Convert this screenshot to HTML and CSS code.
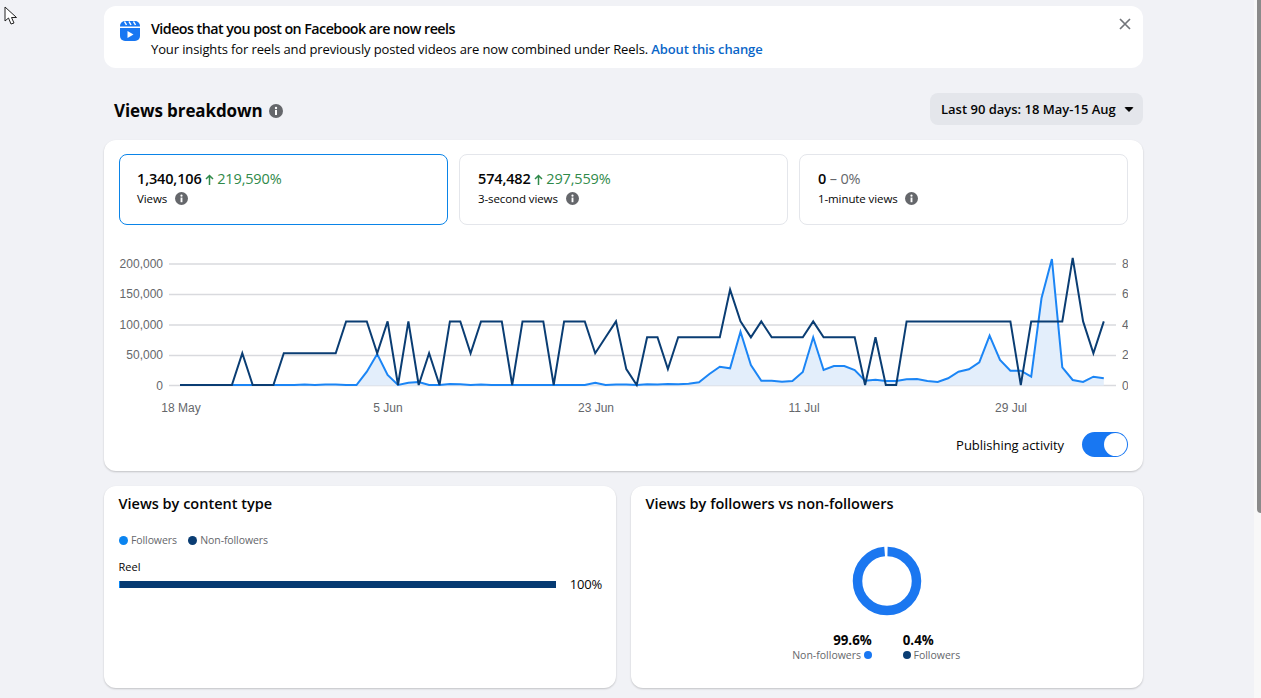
FILE: index.html
```html
<!DOCTYPE html>
<html lang="en">
<head>
    <meta charset="UTF-8">
    <meta name="viewport" content="width=device-width, initial-scale=1.0">
    <title>Views breakdown</title>
    <link rel="stylesheet" href="styles.css">
</head>
<body>

    <!-- Mouse pointer and scrollbar, both sit over the page -->
    <svg class="pointer" width="14" height="20" viewBox="0 0 14 20">
        <path d="M1 1 L1 15 L4.5 12 L7 18 L10 17 L7.5 11.5 L12.5 11.5 Z" fill="#fff" stroke="#222" stroke-width="1"/>
    </svg>
    <div class="scrollbar"><div class="scrollbar-thumb"></div></div>

    <div class="page">

        <!-- Notice -->
        <div class="notice">
            <svg class="notice-icon" width="20" height="20" viewBox="0 0 20 20">
                <path d="M0 5.5 V5 A5 5 0 0 1 5 0 H15 A5 5 0 0 1 20 5 V5.5 Z" fill="#1877f2"/>
                <path d="M0 7 H20 V15 A5 5 0 0 1 15 20 H5 A5 5 0 0 1 0 15 Z" fill="#1877f2"/>
                <path d="M4.5 0.5 L6.5 4 M9 0.5 L11 4 M13.5 0.5 L15.5 4" stroke="#fff" stroke-width="1.5"/>
                <path d="M7.5 10 L13.5 13.5 L7.5 17 Z" fill="#fff"/>
            </svg>
            <div class="notice-text">
                <div class="notice-title">Videos that you post on Facebook are now reels</div>
                <div class="notice-body">Your insights for reels and previously posted videos are now combined under Reels. <a class="notice-link" href="#">About this change</a></div>
            </div>
            <svg class="notice-close" width="12" height="12" viewBox="0 0 12 12">
                <path d="M1 1 L11 11 M11 1 L1 11" stroke="#72757a" stroke-width="1.7"/>
            </svg>
        </div>

        <!-- Heading -->
        <div class="section-head">
            <div class="section-title">
                <h1>Views breakdown</h1>
                <svg class="info info-big" viewBox="0 0 14 14"><circle cx="7" cy="7" r="7" fill="#65676b"/><rect x="6" y="6" width="2" height="5" fill="#fff"/><circle cx="7" cy="4" r="1.2" fill="#fff"/></svg>
            </div>
            <button class="range-button">Last 90 days: 18 May-15 Aug <span class="caret"></span></button>
        </div>

        <!-- Main chart card -->
        <div class="card main-card">
            <div class="tiles">
                <div class="tile active">
                    <div class="tile-value">1,340,106 <span class="up"><svg class="arrow" width="9" height="11" viewBox="0 0 9 11"><path d="M4.5 11 V1.5 M1 5 L4.5 1.5 L8 5" fill="none" stroke="#2f8a4a" stroke-width="1.5"/></svg>219,590%</span></div>
                    <div class="tile-label">Views
                        <svg class="info" viewBox="0 0 14 14"><circle cx="7" cy="7" r="7" fill="#65676b"/><rect x="6" y="6" width="2" height="5" fill="#fff"/><circle cx="7" cy="4" r="1.2" fill="#fff"/></svg>
                    </div>
                </div>
                <div class="tile">
                    <div class="tile-value">574,482 <span class="up"><svg class="arrow" width="9" height="11" viewBox="0 0 9 11"><path d="M4.5 11 V1.5 M1 5 L4.5 1.5 L8 5" fill="none" stroke="#2f8a4a" stroke-width="1.5"/></svg>297,559%</span></div>
                    <div class="tile-label">3-second views
                        <svg class="info" viewBox="0 0 14 14"><circle cx="7" cy="7" r="7" fill="#65676b"/><rect x="6" y="6" width="2" height="5" fill="#fff"/><circle cx="7" cy="4" r="1.2" fill="#fff"/></svg>
                    </div>
                </div>
                <div class="tile">
                    <div class="tile-value">0 <span class="flat">– 0%</span></div>
                    <div class="tile-label">1-minute views
                        <svg class="info" viewBox="0 0 14 14"><circle cx="7" cy="7" r="7" fill="#65676b"/><rect x="6" y="6" width="2" height="5" fill="#fff"/><circle cx="7" cy="4" r="1.2" fill="#fff"/></svg>
                    </div>
                </div>
            </div>

            <svg class="line-chart" width="1009" height="170" viewBox="119 250 1009 170">
                <g class="grid">
                    <line x1="169" x2="1116" y1="264" y2="264"/>
                    <line x1="169" x2="1116" y1="294.5" y2="294.5"/>
                    <line x1="169" x2="1116" y1="325" y2="325"/>
                    <line x1="169" x2="1116" y1="355.5" y2="355.5"/>
                    <line x1="169" x2="1116" y1="385.5" y2="385.5"/>
                </g>
                <g class="axis axis-left">
                    <text x="163" y="268">200,000</text>
                    <text x="163" y="298">150,000</text>
                    <text x="163" y="329">100,000</text>
                    <text x="163" y="359">50,000</text>
                    <text x="163" y="390">0</text>
                </g>
                <g class="axis">
                    <text x="1122" y="268">8</text>
                    <text x="1122" y="298">6</text>
                    <text x="1122" y="329">4</text>
                    <text x="1122" y="359">2</text>
                    <text x="1122" y="390">0</text>
                </g>
                <g class="axis axis-bottom">
                    <text x="181" y="412">18 May</text>
                    <text x="388" y="412">5 Jun</text>
                    <text x="596" y="412">23 Jun</text>
                    <text x="804" y="412">11 Jul</text>
                    <text x="1011" y="412">29 Jul</text>
                </g>
                <polygon id="viewsArea" class="views-area"/>
                <polyline id="viewsLine" class="views-line"/>
                <polyline id="postsLine" class="posts-line"/>
            </svg>

            <div class="toggle-row">
                <span>Publishing activity</span>
                <div class="toggle"><div class="toggle-knob"></div></div>
            </div>
        </div>

        <!-- Lower cards -->
        <div class="lower-cards">
            <div class="card lower-card">
                <h2>Views by content type</h2>
                <div class="legend">
                    <span class="legend-item"><span class="dot dot-light"></span>Followers</span>
                    <span class="legend-item"><span class="dot dot-dark"></span>Non-followers</span>
                </div>
                <div class="bar-label">Reel</div>
                <div class="bar-row">
                    <div class="bar"><div class="bar-followers"></div></div>
                    <span class="bar-value">100%</span>
                </div>
            </div>

            <div class="card lower-card">
                <h2>Views by followers vs non-followers</h2>
                <div class="donut-wrap">
                    <svg width="70" height="70" viewBox="0 0 70 70">
                        <circle class="donut" cx="35" cy="35" r="29.5" pathLength="100" stroke-dasharray="98.4 1.6" stroke-dashoffset="-0.3" transform="rotate(-90 35 35)"/>
                    </svg>
                </div>
                <div class="split">
                    <div class="split-left">
                        <div class="split-value">99.6%</div>
                        <div class="split-label">Non-followers <span class="dot dot-blue"></span></div>
                    </div>
                    <div>
                        <div class="split-value">0.4%</div>
                        <div class="split-label"><span class="dot dot-dark"></span> Followers</div>
                    </div>
                </div>
            </div>
        </div>
    </div>

    <script src="chart.js"></script>
</body>
</html>
```

FILE: styles.css
```css
html, body {
    margin: 0;
    height: 698px;
    overflow: hidden;
}
body {
    font-family: "Open Sans", "Liberation Sans", sans-serif;
    background-color: #f1f2f6;
    color: #050505;
}
.pointer {
    position: absolute;
    left: 4px;
    top: 6px;
}
.scrollbar {
    position: fixed;
    top: 0;
    right: 0;
    bottom: 0;
    width: 7px;
    background: #f8f8f8;
}
.scrollbar-thumb {
    width: 4px;
    height: 513px;
    margin-left: 3px;
    background: #8a8a8a;
    border-radius: 0 0 0 4px;
}
.page {
    width: 1039px;
    margin-left: 104px;
    padding-top: 6px;
}

/* Notice */
.notice {
    display: flex;
    height: 62px;
    box-sizing: border-box;
    padding: 14px 12px 0 16px;
    background: white;
    border-radius: 12px;
}
.notice-icon {
    flex: none;
    margin: 1px 11px 0 0;
}
.notice-text {
    flex: 1;
}
.notice-title {
    font-size: 14.3px;
    line-height: 17px;
    font-weight: 600;
    letter-spacing: -0.55px;
}
.notice-body {
    font-size: 13px;
    line-height: 18px;
    margin-top: 3px;
    letter-spacing: -0.12px;
}
.notice-link {
    color: #0a66c8;
    font-weight: 600;
    text-decoration: none;
}
.notice-close {
    flex: none;
    margin-top: -2px;
}

/* Heading */
.section-head {
    display: flex;
    justify-content: space-between;
    align-items: center;
    height: 32px;
    margin: 25px 0 15px;
}
.section-title {
    display: flex;
    align-items: center;
    margin: 3px 0 0 10px;
}
h1 {
    font-size: 17px;
    line-height: 23px;
    font-weight: 700;
    margin: 0;
    letter-spacing: -0.1px;
}
.info {
    width: 13px;
    height: 13px;
    margin-left: 5px;
    vertical-align: -2px;
}
.info-big {
    width: 14px;
    height: 14px;
    margin-left: 6px;
}
.range-button {
    display: flex;
    align-items: center;
    width: 213px;
    height: 32px;
    padding: 0 0 0 11px;
    border: none;
    border-radius: 8px;
    background-color: #e4e6eb;
    color: #050505;
    font-family: inherit;
    font-size: 13px;
    font-weight: 550;
    white-space: pre;
}
.caret {
    margin-left: 5px;
    margin-top: 1px;
    border-top: 5px solid #050505;
    border-left: 5px solid transparent;
    border-right: 5px solid transparent;
    border-radius: 2px;
}

/* Cards */
.card {
    background: white;
    border-radius: 12px;
    box-shadow: 0 1px 2px rgba(0, 0, 0, 0.2);
    box-sizing: border-box;
}
.main-card {
    height: 331px;
    padding: 14px 15px 0;
}
.tiles {
    display: grid;
    grid-template-columns: repeat(3, 1fr);
    gap: 11px;
}
.tile {
    height: 71px;
    box-sizing: border-box;
    padding: 14px 17px;
    border: 1px solid #e4e6eb;
    border-radius: 8px;
}
.tile + .tile {
    padding-left: 18px;
}
.tile.active {
    border-color: #0a84e8;
}
.tile-value {
    font-size: 14.5px;
    line-height: 20px;
    font-weight: 550;
    letter-spacing: -0.15px;
}
.up {
    color: #2f8a4a;
    font-weight: 450;
}
.arrow {
    margin-right: 3px;
    vertical-align: -1px;
}
.flat {
    color: #65676b;
    font-weight: 400;
}
.tile-label {
    font-size: 11.5px;
    line-height: 20px;
    letter-spacing: -0.1px;
}
.line-chart {
    display: block;
    margin-top: 25px;
}
.grid line {
    stroke: #d9dade;
    stroke-width: 1.4;
}
.axis text {
    font-family: "Liberation Sans", Arial, sans-serif;
    font-size: 12px;
    fill: #65676b;
}
.axis-left text {
    text-anchor: end;
}
.axis-bottom text {
    text-anchor: middle;
}
.views-area {
    fill: #e3eefb;
}
.views-line, .posts-line {
    fill: none;
    stroke-width: 2;
    stroke-linejoin: miter;
}
.views-line {
    stroke: #1b85f5;
}
.posts-line {
    stroke: #0a3d73;
}
.toggle-row {
    display: flex;
    justify-content: flex-end;
    align-items: center;
    gap: 18px;
    margin-top: 12px;
    font-size: 13px;
    letter-spacing: -0.03px;
}
.toggle {
    display: flex;
    justify-content: flex-end;
    align-items: center;
    width: 46px;
    height: 25px;
    box-sizing: border-box;
    padding-right: 1px;
    background: #1877f2;
    border-radius: 13px;
}
.toggle-knob {
    width: 23px;
    height: 23px;
    background: white;
    border-radius: 50%;
}

/* Lower cards */
.lower-cards {
    display: grid;
    grid-template-columns: 1fr 1fr;
    gap: 15px;
    margin-top: 15px;
}
.lower-card {
    height: 202px;
    padding: 8px 14px 10px 14.5px;
}
h2 {
    font-size: 14.5px;
    line-height: 20px;
    font-weight: 600;
    margin: 0;
}
.legend {
    display: flex;
    gap: 11px;
    margin-top: 18px;
    font-size: 10.5px;
    line-height: 16px;
    letter-spacing: -0.1px;
    color: #65676b;
}
.dot {
    display: inline-block;
    width: 9px;
    height: 9px;
    border-radius: 50%;
}
.legend-item .dot {
    margin-right: 3.5px;
    vertical-align: -1px;
}
.dot-light {
    background: #0a84f0;
}
.dot-dark {
    background: #0a3d73;
}
.dot-blue {
    background: #1877f2;
}
.bar-label {
    font-size: 11px;
    line-height: 16px;
    margin-top: 11px;
}
.bar-row {
    display: flex;
    justify-content: space-between;
    align-items: center;
}
.bar {
    width: 437px;
    height: 7px;
    background: #053a72;
}
.bar-followers {
    width: 1px;
    height: 7px;
    background: #0a84f0;
}
.bar-value {
    font-size: 13px;
    line-height: 18px;
    font-weight: 500;
    letter-spacing: -0.2px;
}
.donut-wrap {
    display: flex;
    justify-content: center;
    margin-top: 32px;
}
.donut {
    fill: none;
    stroke: #1b77f0;
    stroke-width: 9.5;
}
.split {
    display: grid;
    grid-template-columns: 1fr 1fr;
    column-gap: 31px;
    margin-top: 16px;
    text-align: left;
}
.split-left {
    text-align: right;
}
.split-value {
    font-size: 13.3px;
    line-height: 16px;
    font-weight: 700;
}
.split-label {
    font-size: 10.5px;
    line-height: 14px;
    color: #65676b;
}
.split-label .dot {
    width: 8px;
    height: 8px;
}
```

FILE: chart.js
```js
// Values read per day, 18 May to 15 Aug
const posts = [0,0,0,0,0,0,2,0,0,0,2,2,2,2,2,2,4,4,4,2,4,0,4,0,2,0,4,4,2,4,4,4,0,4,4,4,0,4,4,4,2,3,4,1,0,3,3,1,3,3,3,3,3,6,4,3,4,3,3,3,3,4,3,3,3,3,0,3,0,0,4,4,4,4,4,4,4,4,4,4,4,0,4,4,4,4,8,4,2,4];
const views = [385,385,385,385,385,385,385,385,385,385,385,385,384.5,385,384.5,384.5,385,385,371.7,354,375,385,382.7,382,385,385,384,384.3,385,384.6,385,385,385,385,385,385,385,385,385,385,382.7,385,384.5,384.5,385,384.3,384.6,384,384.3,383.7,382.3,374,366.7,368.3,331.7,365,380.7,380.7,381.7,381,372,337.3,370,366,366,370,380.7,379.7,381,381,379.3,379,381,382,378.3,371.7,369.3,362.3,335.7,360,370.7,370.7,376.7,298.3,259,367.3,380,382,376.7,378.3];

function xAt(i) {
    return 180 + i * 10.38;
}

const postPoints = posts.map((v, i) => xAt(i).toFixed(1) + ',' + (385 - v * 15.9).toFixed(1)).join(' ');
const viewPoints = views.map((y, i) => xAt(i).toFixed(1) + ',' + y).join(' ');

document.getElementById('postsLine').setAttribute('points', postPoints);
document.getElementById('viewsLine').setAttribute('points', viewPoints);
document.getElementById('viewsArea').setAttribute('points', '180,385.5 ' + viewPoints + ' ' + xAt(89).toFixed(1) + ',385.5');
```
